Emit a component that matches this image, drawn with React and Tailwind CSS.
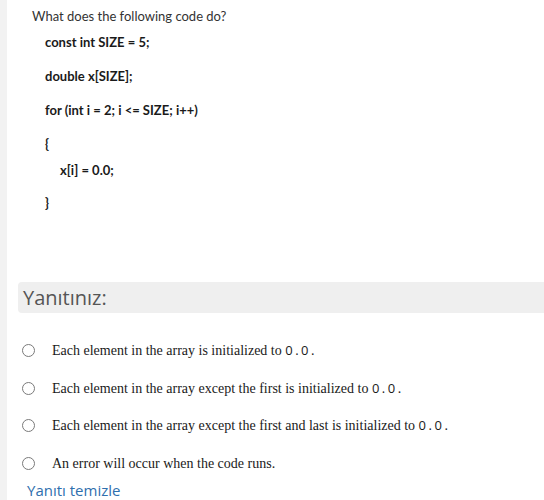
import React from "react";

const options = [
  ["Each element in the array is initialized to ", true],
  ["Each element in the array except the first is initialized to ", true],
  ["Each element in the array except the first and last is initialized to ", true],
  ["An error will occur when the code runs.", false],
];

function Radio() {
  return (
    <span className="inline-block w-[13px] h-[13px] rounded-full border border-[#7a7a7a] bg-white shrink-0" />
  );
}

export default function App() {
  return (
    <div className="flex w-[544px] h-[500px] bg-white overflow-hidden">
      <div className="w-[7px] shrink-0 bg-[#f2f2f2]" />
      <div className="flex-1 flex flex-col">
        <div className="pl-[25px] pt-[7px] font-['Lato',sans-serif] text-[13px] text-[#333]">
          <div className="h-[18px] leading-[18px]">What does the following code do?</div>
          <div className="pl-[13px] font-bold text-[13px] text-[#1a1a1a]">
            <div className="h-[18px] leading-[18px] mt-[8px]">const int SIZE = 5;</div>
            <div className="h-[18px] leading-[18px] mt-[16px]">double x[SIZE];</div>
            <div className="h-[18px] leading-[18px] mt-[16px]">for (int i = 2; i &lt;= SIZE; i++)</div>
            <div className="h-[18px] leading-[18px] mt-[16px]">{"{"}</div>
            <div className="h-[18px] leading-[18px] mt-[8px] pl-[15px]">x[i] = 0.0;</div>
            <div className="h-[18px] leading-[18px] mt-[15px]">{"}"}</div>
          </div>
        </div>
        <div className="mt-[70px] ml-[11px] h-[31px] bg-[#efefef] rounded-l-[4px] flex items-center pl-[5px] font-['Open_Sans',sans-serif] text-[20px] text-[#555]">
          Yanıtınız:
        </div>
        <div className="flex flex-col mt-[19px] pl-[15px]">
          {options.map(([t, z], i) => (
            <div key={i} className="flex items-center h-[37.5px]">
              <Radio />
              <span className="ml-[17px] font-['Liberation_Serif',serif] text-[14px] text-[#1a1a1a]">
                {t}
                {z && (
                  <>
                    <span className="font-['Open_Sans',sans-serif] text-[13px] tracking-[2.5px]">0.0</span>.
                  </>
                )}
              </span>
            </div>
          ))}
        </div>
        <div className="pl-[20px] -mt-[1px] font-['Open_Sans',sans-serif] text-[15px] text-[#2f6fae] leading-[18px]">
          Yanıtı temizle
        </div>
      </div>
    </div>
  );
}
